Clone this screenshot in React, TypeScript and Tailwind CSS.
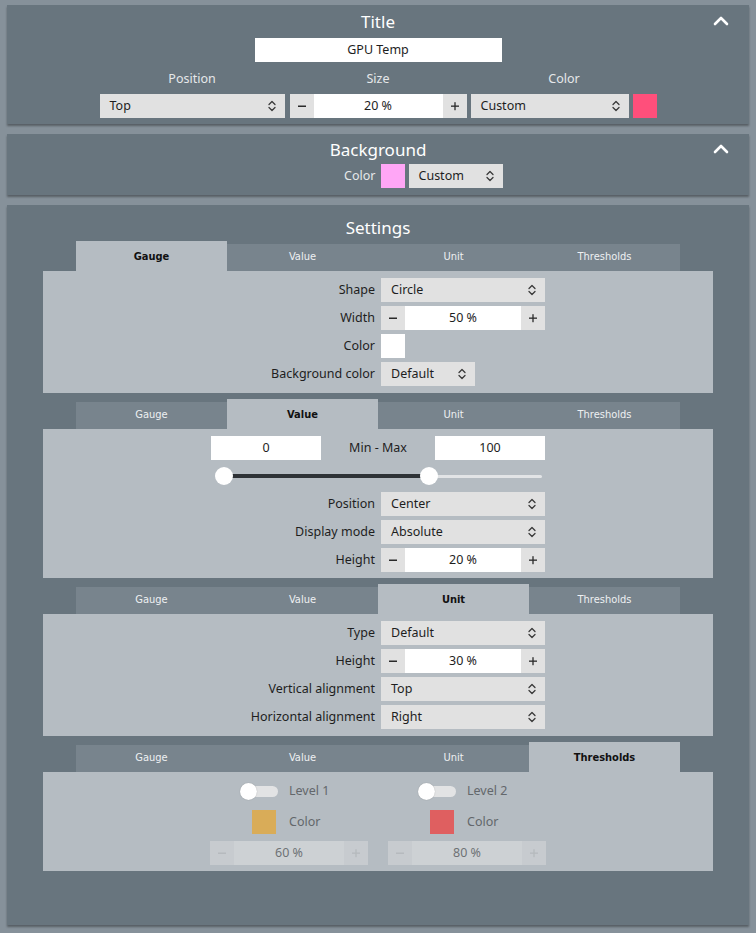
import React from "react";

function Chevrons({ color = "#3a3a3a" }: { color?: string }) {
  return (
    <svg width="10" height="14" viewBox="0 0 10 14" fill="none" stroke={color} strokeWidth="1.3" strokeLinecap="round" strokeLinejoin="round">
      <path d="M2 5.5 L5 2.5 L8 5.5" />
      <path d="M2 8.5 L5 11.5 L8 8.5" />
    </svg>
  );
}

function UpChevron() {
  return (
    <svg width="16" height="10" viewBox="0 0 16 10" fill="none" stroke="#ffffff" strokeWidth="2.6" strokeLinecap="round" strokeLinejoin="round">
      <path d="M2 8 L8 2 L14 8" />
    </svg>
  );
}

function Select({ value, w }: { value: string; w: string }) {
  return (
    <div className={`flex h-6 items-center justify-between bg-[#e1e1e1] pl-[10px] pr-[8px] text-[#1e1e1e] ${w}`}>
      <span>{value}</span>
      <Chevrons />
    </div>
  );
}

function Minus({ color }: { color: string }) {
  return (
    <svg width="10" height="10" viewBox="0 0 10 10">
      <rect x="1" y="4.5" width="8" height="1.5" fill={color} />
    </svg>
  );
}
function Plus({ color }: { color: string }) {
  return (
    <svg width="10" height="10" viewBox="0 0 10 10">
      <rect x="1" y="4.5" width="8" height="1.3" fill={color} />
      <rect x="4.35" y="1.2" width="1.3" height="8" fill={color} />
    </svg>
  );
}

function Spin({ value, w, disabled = false }: { value: string; w: string; disabled?: boolean }) {
  const btn = disabled ? "bg-[#c7cbcf]" : "bg-[#e1e1e1]";
  const mid = disabled ? "bg-[#cdd1d4] text-[#6e7174]" : "bg-white text-[#1e1e1e]";
  const sign = disabled ? "#b6babe" : "#2a2a2a";
  return (
    <div className={`flex h-6 ${w}`}>
      <div className={`flex w-6 items-center justify-center ${btn}`}>
        <Minus color={sign} />
      </div>
      <div className={`flex flex-1 items-center justify-center ${mid}`}>{value}</div>
      <div className={`flex w-6 items-center justify-center ${btn}`}>
        <Plus color={sign} />
      </div>
    </div>
  );
}

function Swatch({ color }: { color: string }) {
  return <div className="h-6 w-6 shrink-0" style={{ backgroundColor: color }} />;
}

const TABS = ["Gauge", "Value", "Unit", "Thresholds"];

function Tabs({ active }: { active: number }) {
  return (
    <div className="mx-[33px] flex h-[30px] items-end font-['DejaVu_Sans_Condensed','DejaVu_Sans',sans-serif] text-[11px]">
      {TABS.map((t, i) =>
        i === active ? (
          <div key={t} className="flex h-[30px] flex-1 items-center justify-center bg-[#b5bcc2] font-bold text-[#111]">
            {t}
          </div>
        ) : (
          <div key={t} className="flex h-[27px] flex-1 items-center justify-center bg-[#78848d] pb-[2px] text-[#eef0f2]">
            {t}
          </div>
        )
      )}
    </div>
  );
}

function Row({ label, children }: { label: string; children: React.ReactNode }) {
  return (
    <div className="grid h-6 grid-cols-2 gap-x-[6px]">
      <div className="flex items-center justify-end text-[#1e1e1e]">{label}</div>
      <div className="flex items-center">{children}</div>
    </div>
  );
}

function Toggle() {
  return (
    <div className="relative h-[17px] w-[38px]">
      <div className="absolute left-[2px] right-0 top-[3px] h-[11px] rounded-full bg-[#e2e3e4]" />
      <div className="absolute left-0 top-0 h-[17px] w-[17px] rounded-full bg-white shadow-[0_0_1px_rgba(0,0,0,0.3)]" />
    </div>
  );
}

function Threshold({ level, color, value }: { level: string; color: string; value: string }) {
  return (
    <div className="flex w-[158px] flex-col gap-[7px]">
      <div className="grid h-6 grid-cols-2">
        <div className="flex items-center justify-end pr-[11px]">
          <Toggle />
        </div>
        <div className="flex items-center text-[#63676b]">{level}</div>
      </div>
      <div className="grid h-6 grid-cols-2">
        <div className="flex items-center justify-end pr-[13px]">
          <Swatch color={color} />
        </div>
        <div className="flex items-center text-[#63676b]">Color</div>
      </div>
      <Spin value={value} w="w-[158px]" disabled />
    </div>
  );
}

export default function App() {
  return (
    <div className="min-h-screen bg-[#86919a] px-[7px] pb-[8px] pt-[5px] font-['Noto_Sans',sans-serif] text-[12.5px] leading-none">
      {/* Title panel */}
      <div className="bg-[#68757e] pb-[6px] pt-[4px] shadow-[0_2px_2px_rgba(0,0,0,0.35)]">
        <div className="grid h-6 grid-cols-[1fr_auto_1fr] items-center">
          <div />
          <div className="text-[17px] text-white">Title</div>
          <div className="flex justify-end pr-[20px]">
            <UpChevron />
          </div>
        </div>
        <div className="mt-[5px] flex justify-center">
          <div className="flex h-6 w-[247px] items-center justify-center bg-white text-[#1e1e1e]">GPU Temp</div>
        </div>
        <div className="mt-[9px] flex h-4 justify-center text-[#e6e8ea]">
          <div className="flex w-[186px] items-center justify-center">Position</div>
          <div className="flex w-[186px] items-center justify-center">Size</div>
          <div className="flex w-[186px] items-center justify-center">Color</div>
        </div>
        <div className="mt-[7px] flex justify-center gap-[4px]">
          <Select value="Top" w="w-[185px]" />
          <div className="ml-[1px]">
            <Spin value="20 %" w="w-[177px]" />
          </div>
          <Select value="Custom" w="w-[158px]" />
          <Swatch color="#ff4f7b" />
        </div>
      </div>

      {/* Background panel */}
      <div className="mt-[10px] bg-[#68757e] pb-[7px] pt-[3px] shadow-[0_2px_2px_rgba(0,0,0,0.35)]">
        <div className="grid h-6 grid-cols-[1fr_auto_1fr] items-center">
          <div />
          <div className="text-[17px] text-white">Background</div>
          <div className="flex justify-end pr-[20px]">
            <UpChevron />
          </div>
        </div>
        <div className="mt-[3px] grid grid-cols-2 gap-x-[5px]">
          <div className="flex items-center justify-end text-[#e6e8ea]">Color</div>
          <div className="flex items-center gap-[4px]">
            <Swatch color="#ffa6f6" />
            <Select value="Custom" w="w-[94px]" />
          </div>
        </div>
      </div>

      {/* Settings panel */}
      <div className="mt-[10px] bg-[#68757e] px-[36px] pb-[54px] pt-[10px] shadow-[0_2px_2px_rgba(0,0,0,0.35)]">
        <div className="flex h-6 items-center justify-center text-[17px] text-white">Settings</div>

        <div className="mt-[2px]">
          <Tabs active={0} />
          <div className="flex flex-col gap-[4px] bg-[#b5bcc2] py-[7px]">
            <Row label="Shape">
              <Select value="Circle" w="w-[164px]" />
            </Row>
            <Row label="Width">
              <Spin value="50 %" w="w-[164px]" />
            </Row>
            <Row label="Color">
              <Swatch color="#ffffff" />
            </Row>
            <Row label="Background color">
              <Select value="Default" w="w-[94px]" />
            </Row>
          </div>
        </div>

        <div className="mt-[6px]">
          <Tabs active={1} />
          <div className="flex flex-col gap-[4px] bg-[#b5bcc2] pb-[6px] pt-[7px]">
            <div className="flex h-6 justify-center">
              <div className="flex w-[110px] items-center justify-center bg-white text-[#1e1e1e]">0</div>
              <div className="flex w-[114px] items-center justify-center text-[#1e1e1e]">Min - Max</div>
              <div className="flex w-[110px] items-center justify-center bg-white text-[#1e1e1e]">100</div>
            </div>
            <div className="flex h-6 justify-center">
              <div className="relative h-6 w-[334px]">
                <div className="absolute left-[13px] top-[10px] h-[4px] w-[205px] rounded-full bg-[#2e3236]" />
                <div className="absolute left-[218px] top-[10.5px] h-[3px] w-[113px] rounded-full bg-[#e2e4e6]" />
                <div className="absolute left-[4px] top-[3px] h-[18px] w-[18px] rounded-full bg-white" />
                <div className="absolute left-[209px] top-[3px] h-[18px] w-[18px] rounded-full bg-white" />
              </div>
            </div>
            <Row label="Position">
              <Select value="Center" w="w-[164px]" />
            </Row>
            <Row label="Display mode">
              <Select value="Absolute" w="w-[164px]" />
            </Row>
            <Row label="Height">
              <Spin value="20 %" w="w-[164px]" />
            </Row>
          </div>
        </div>

        <div className="mt-[6px]">
          <Tabs active={2} />
          <div className="flex flex-col gap-[4px] bg-[#b5bcc2] py-[7px]">
            <Row label="Type">
              <Select value="Default" w="w-[164px]" />
            </Row>
            <Row label="Height">
              <Spin value="30 %" w="w-[164px]" />
            </Row>
            <Row label="Vertical alignment">
              <Select value="Top" w="w-[164px]" />
            </Row>
            <Row label="Horizontal alignment">
              <Select value="Right" w="w-[164px]" />
            </Row>
          </div>
        </div>

        <div className="mt-[6px]">
          <Tabs active={3} />
          <div className="flex justify-center gap-[20px] bg-[#b5bcc2] pb-[6px] pt-[7px]">
            <Threshold level="Level 1" color="#d9ac58" value="60 %" />
            <Threshold level="Level 2" color="#df5f60" value="80 %" />
          </div>
        </div>
      </div>
    </div>
  );
}
